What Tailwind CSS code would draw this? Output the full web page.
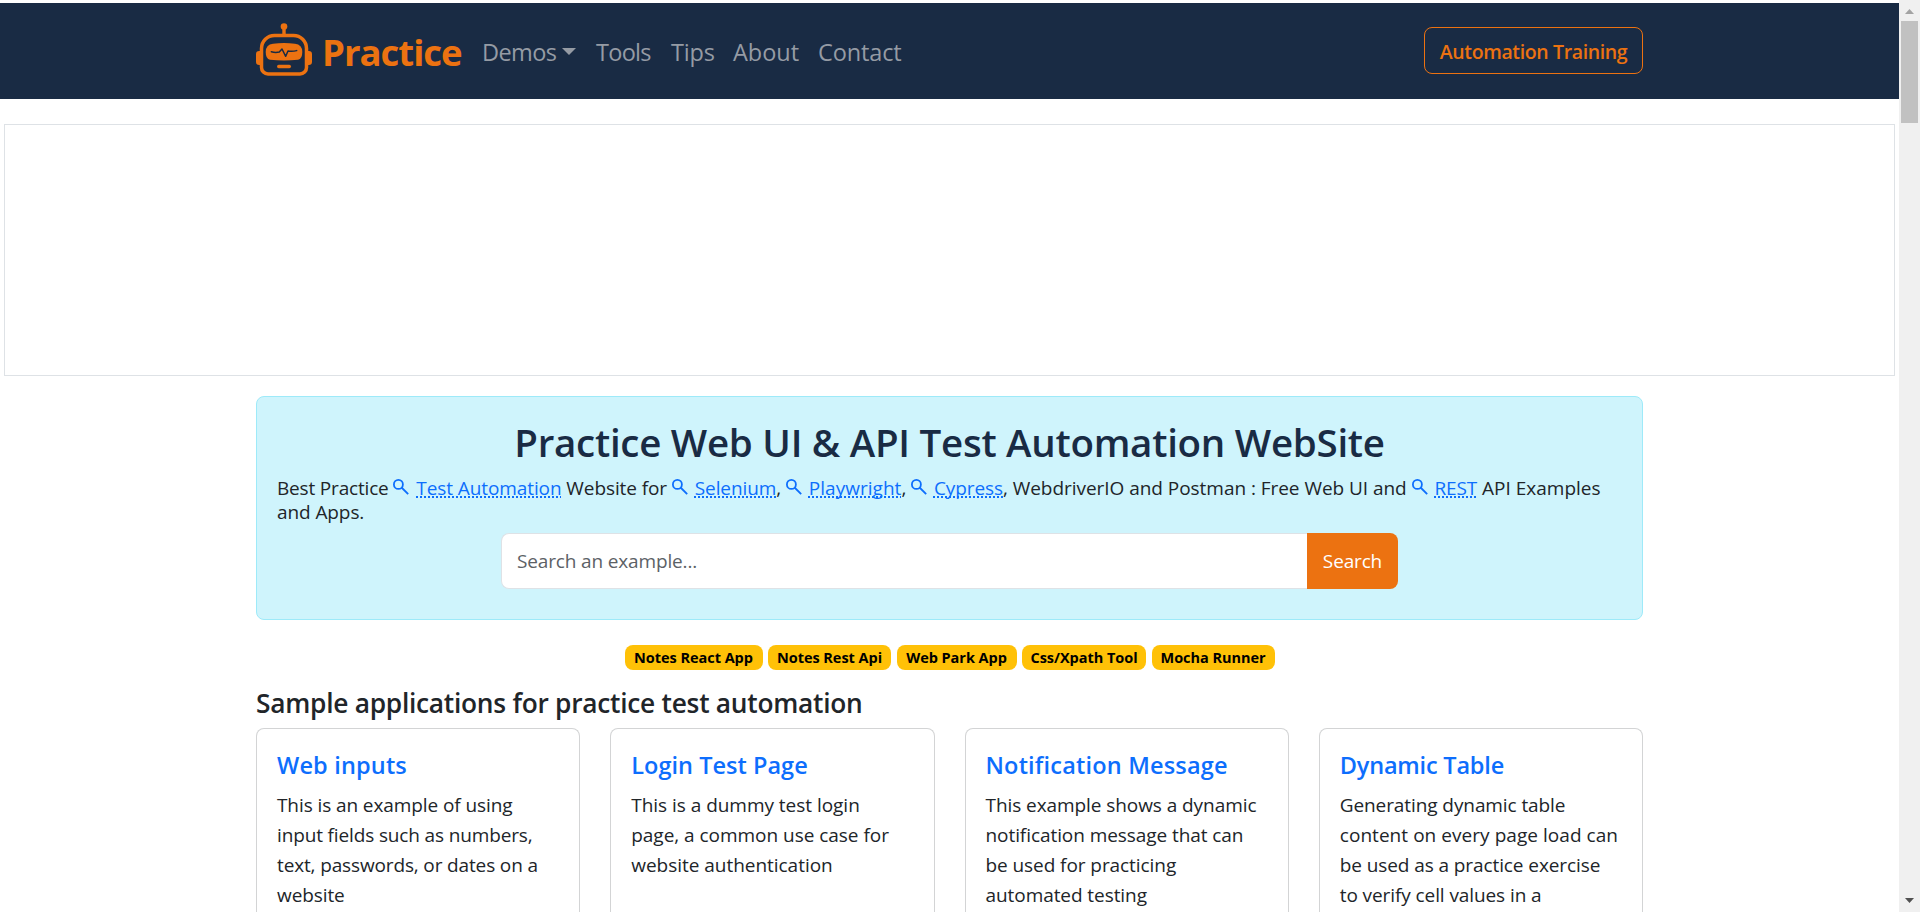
<!DOCTYPE html>
<html lang="en">
<head>
<meta charset="utf-8">
<title>Practice Web UI &amp; API Test Automation WebSite</title>
<script src="https://cdn.jsdelivr.net/npm/@tailwindcss/browser@4"></script>
</head>
<body class="flex h-[912px] w-[1920px] overflow-hidden bg-white font-['Open_Sans','Noto_Sans',sans-serif] text-[#212529]">
<svg class="hidden">
  <symbol id="search" viewBox="0 0 16 16" fill="none" stroke="#0d6efd" stroke-width="1.8">
    <circle cx="5.4" cy="5.4" r="4.5"/><path d="M8.5 8.5 15.2 15.2"/>
  </symbol>
</svg>

<div class="h-full w-[1899px] shrink-0 pt-[3px]">
  <nav class="h-24 bg-[#192b44] px-64">
    <div class="flex h-full items-center text-[23.5px] leading-8 text-[#959ba4] [&>a]:pt-0.5">
      <a class="flex items-center">
        <svg class="-mt-[7px] h-[54px] w-14" viewBox="0 0 56 54" fill="none" stroke="#ec7211">
          <circle cx="28" cy="4.5" r="3.3" fill="#ec7211" stroke="none"/>
          <path d="M28 6v7" stroke-width="3.4"/>
          <path d="M18.500 13.500h19a13 13 0 0 1 13 13V45.500a6.500 6.500 0 0 1-6.500 6.500H12a6.500 6.500 0 0 1-6.500-6.500V26.500a13 13 0 0 1 13-13z" stroke-width="3.500"/>
          <path d="M4.500 29H3.200A3.200 3.200 0 0 0 0 32.200v7.600A3.200 3.200 0 0 0 3.200 43h1.300zM51.500 29h1.300a3.200 3.200 0 0 1 3.200 3.200v7.600a3.200 3.200 0 0 1-3.200 3.200h-1.300z" fill="#ec7211" stroke="none"/>
          <path d="M17 21.700q11-1.200 22 0 7.300.800 7.300 8.300 0 7-4.300 7.700-14 1.400-28 0-4.300-.7-4.300-7.700 0-7.500 7.300-8.300z" fill="#ec7211" stroke="none"/>
          <path d="M15.300 29.700q4 1.200 8 .3l2.700-3 3.700 7.300 2.300-5.300q4.300.8 8.700-.4" stroke="#192b44" stroke-width="1.500" stroke-linecap="round" stroke-linejoin="round"/>
          <path d="M22.700 44.500h10.600" stroke-width="3.400" stroke-linecap="round"/>
        </svg>
        <span class="-mt-px ml-[10px] w-[150px] text-[36.5px] leading-10 font-bold tracking-[-1px] whitespace-nowrap text-[#ec7211]">Practice</span>
      </a>
      <a class="ml-[10px] flex w-[113px] items-center"><span class="tracking-[-0.6px]">Demos</span><svg class="-mt-0.5 ml-[6px] h-[7px] w-[14px]" viewBox="0 0 14 7"><path d="M0 0h14L7 7z" fill="#959ba4"/></svg></a>
      <a class="ml-px w-[75px] tracking-[-0.7px]">Tools</a>
      <a class="w-[62px] tracking-[-0.2px]">Tips</a>
      <a class="w-[85px]">About</a>
      <a class="tracking-[-0.13px]">Contact</a>
      <span class="-mt-px ml-auto flex h-[47px] w-[219px] items-center justify-center rounded-lg border border-[#ec7211] pt-[3px] text-[19.5px] font-semibold tracking-[-0.37px] whitespace-nowrap text-[#ec7211]">Automation Training</span>
    </div>
  </nav>

  <div class="mx-1 mt-[25px] h-[252px] border border-[#dee2e6]"></div>

  <main class="mx-64">
    <section class="mt-5 h-56 rounded-lg border border-[#9eeaf9] bg-[#cff4fc] px-5 pt-[21px]">
      <h1 class="text-center text-[38.5px] leading-[48px] font-semibold tracking-[-0.27px] whitespace-nowrap text-[#192b44]">Practice Web UI &amp; API Test Automation WebSite</h1>
      <p class="mt-[10px] text-[19px] leading-6 tracking-[-0.09px] whitespace-nowrap [&_a]:text-[#0d6efd] [&_a]:underline [&_a]:decoration-dotted [&_a]:decoration-2 [&_a]:underline-offset-1 [&_a]:[text-decoration-skip-ink:none] [&_svg]:mr-[2px] [&_svg]:inline [&_svg]:size-4 [&_svg]:-mt-[5px]"><span class="tracking-[-0.18px]">Best Practice</span> <svg><use href="#search"/></svg> <a>Test Automation</a> Website for <svg><use href="#search"/></svg> <a>Selenium</a>, <svg><use href="#search"/></svg> <a class="tracking-[0.03px]">Playwright</a>, <svg><use href="#search"/></svg> <a>Cypress</a>, <span class="tracking-[-0.04px]">WebdriverIO and Postman : Free Web UI and</span> <svg><use href="#search"/></svg> <a>REST</a> <span class="tracking-normal">API Examples</span><br>and Apps.</p>
      <form class="mx-auto mt-[9px] flex h-14 w-[897px] text-[19px] tracking-[-0.15px]">
        <div class="flex flex-1 items-center rounded-l-lg border border-r-0 border-[#dee2e6] bg-white pt-px pl-[15px] text-[#5c6166]">Search an example...</div>
        <div class="flex w-[91px] items-center justify-center rounded-r-lg bg-[#ec7211] pt-px text-white">Search</div>
      </form>
    </section>

    <div class="mt-[25px] flex h-[25px] justify-center gap-[5.5px] text-[14.5px] font-bold tracking-[-0.04px] whitespace-nowrap text-black [&>span]:flex [&>span]:items-center [&>span]:justify-center [&>span]:rounded-lg [&>span]:bg-[#ffc107]">
      <span class="w-[138px]">Notes React App</span>
      <span class="w-[123px]">Notes Rest Api</span>
      <span class="w-[120px]">Web Park App</span>
      <span class="w-[124px]">Css/Xpath Tool</span>
      <span class="w-[123px]">Mocha Runner</span>
    </div>

    <h2 class="mt-4 text-[26.3px] leading-[34px] font-semibold tracking-[-0.26px]">Sample applications for practice test automation</h2>

    <div class="mt-2 grid grid-cols-4 gap-[30px] text-[19px] leading-[30px] tracking-[-0.09px] whitespace-nowrap [&_h3]:mb-[10px] [&_h3]:text-[23.5px] [&_h3]:font-semibold [&_h3]:text-[#0d6efd] [&>article]:h-[184px] [&>article]:rounded-t-lg [&>article]:border [&>article]:border-b-0 [&>article]:border-[#d3d4d5] [&>article]:px-5 [&>article]:pt-[21px]">
      <article>
        <h3 class="tracking-[0.17px]">Web inputs</h3>
        <p>This is an example of using<br><span class="tracking-[-0.14px]">input fields such as numbers,<br>text, passwords, or dates on a</span><br>website</p>
      </article>
      <article>
        <h3 class="tracking-[0.03px]">Login Test Page</h3>
        <p class="tracking-[-0.03px]">This is a dummy test login<br>page, a common use case for<br>website authentication</p>
      </article>
      <article>
        <h3 class="tracking-[0.19px]">Notification Message</h3>
        <p class="tracking-[-0.07px]">This example shows a dynamic<br>notification message that can<br>be used for practicing<br>automated testing</p>
      </article>
      <article>
        <h3 class="tracking-[-0.19px]">Dynamic Table</h3>
        <p>Generating dynamic table<br><span class="tracking-[0.05px]">content on every page load can</span><br>be used as a practice exercise<br>to verify cell values in a</p>
      </article>
    </div>
  </main>
</div>

<div class="flex h-full w-[21px] flex-col items-center bg-[#f0f0f0] pt-[9px] pb-[9px]">
  <svg class="h-[5px] w-[9px]" viewBox="0 0 9 5"><path d="M0 5h9L4.500 0z" fill="#a3a3a3"/></svg>
  <div class="mt-[7px] h-[102px] w-[17px] bg-[#c1c1c1]"></div>
  <svg class="mt-auto h-[5px] w-[9px]" viewBox="0 0 9 5"><path d="M0 0h9L4.500 5z" fill="#505050"/></svg>
</div>
</body>
</html>
